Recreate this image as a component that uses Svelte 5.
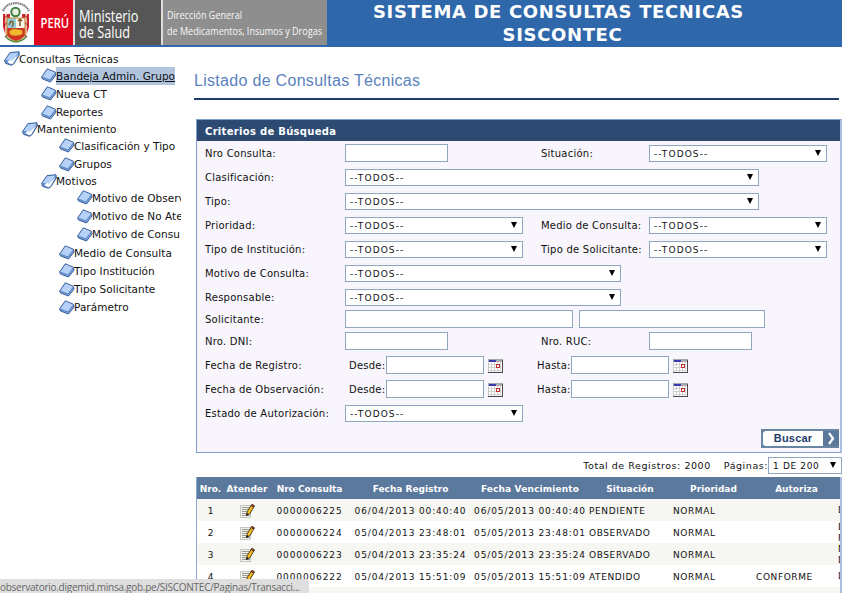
<script>
  const tree = [
    { t: 'Consultas Técnicas', d: 0, open: true },
    { t: 'Bandeja Admin. Grupo', d: 2, active: true },
    { t: 'Nueva CT', d: 2 },
    { t: 'Reportes', d: 2 },
    { t: 'Mantenimiento', d: 1, open: true },
    { t: 'Clasificación y Tipo', d: 3 },
    { t: 'Grupos', d: 3 },
    { t: 'Motivos', d: 2, open: true },
    { t: 'Motivo de Observ', d: 4 },
    { t: 'Motivo de No Ate', d: 4 },
    { t: 'Motivo de Consu', d: 4 },
    { t: 'Medio de Consulta', d: 3 },
    { t: 'Tipo Institución', d: 3 },
    { t: 'Tipo Solicitante', d: 3 },
    { t: 'Parámetro', d: 3 },
  ];
  const rows = [
    ['1', '0000006225', '06/04/2013 00:40:40', '06/05/2013 00:40:40', 'PENDIENTE', 'NORMAL', '', ['D']],
    ['2', '0000006224', '05/04/2013 23:48:01', '05/05/2013 23:48:01', 'OBSERVADO', 'NORMAL', '', ['E', 'F']],
    ['3', '0000006223', '05/04/2013 23:35:24', '05/05/2013 23:35:24', 'OBSERVADO', 'NORMAL', '', ['N', 'D']],
    ['4', '0000006222', '05/04/2013 15:51:09', '05/05/2013 15:51:09', 'ATENDIDO', 'NORMAL', 'CONFORME', ['D']],
    ['', '', '', '', '', '', '', []],
  ];
</script>

{#snippet select(cls)}
  <div class="select {cls}"><span>--TODOS--</span><i></i></div>
{/snippet}

{#snippet calendar()}
  <svg class="cal" width="15" height="14" viewBox="0 0 15 14" shape-rendering="crispEdges">
    <rect width="15" height="14" fill="#c9c9c9" />
    <rect x="1" y="1" width="13" height="12" fill="#fff" />
    <path d="M1 5.500h12M1 8.500h12M1 11.500h12M3.500 3v10M6.500 3v10M9.500 3v10M12.500 3v10" stroke="#d2d2d2" />
    <rect width="15" height="3" fill="#aaa" />
    <rect x="1" y="1" width="7" height="2" fill="#3b3bb0" />
    <path d="M0 13.500h15M14.500 1v13" stroke="#4a4a4a" />
    <rect x="8.500" y="5.500" width="3" height="3" fill="#fff" stroke="#c42f2f" />
  </svg>
{/snippet}

{#snippet dates(label)}
  <div class="row">
    <label>{label}</label>
    <div class="first dates"><span class="from">Desde:</span><div class="input date"></div>{@render calendar()}</div>
    <div class="dates until"><span class="to">Hasta:</span><div class="input date"></div>{@render calendar()}</div>
  </div>
{/snippet}

<div class="page">
  <header>
    <div class="crest">
      <svg width="34" height="45" viewBox="0 0 34 45">
        <path d="M3 11C7 .5 24 .5 29 11" fill="none" stroke="#777" stroke-width="2.200" stroke-dasharray="1.500 .7" />
        <path d="M3 14h7v16l4 9-8-3-3-9zM29 14h-7v16l-4 9 8-3 3-9z" fill="#d8222c" />
        <path d="M6 12v23M26 12v23" stroke="#f4e7cf" stroke-width="1.500" />
        <path d="M3 19l5-4M3 26l5-4M29 19l-5-4M29 26l-5-4" stroke="#8d2420" />
        <circle cx="15.500" cy="12" r="4.200" fill="#e9f0dc" stroke="#3f7d45" stroke-width="2" />
        <path d="M7 18h9v10H7z" fill="#8fd0dc" />
        <path d="M16 18h9v10h-9z" fill="#f8f4e6" />
        <path d="M7 28h18v6q-1 5-9 7-8-2-9-7z" fill="#d92a24" />
        <path d="M9 25l2-4 2 1v3l-1 2M20 20v6M18 21l2-2 2 2" fill="none" stroke="#80592d" stroke-width="1.500" />
        <path d="M9 32q2-4 7-3l6 1q2 4-1 5l-5 1q-7 0-7-4z" fill="#f1b82d" stroke="#a6661c" stroke-width=".7" />
        <path d="M7 18h18v16q-1 5-9 7-8-2-9-7z" fill="none" stroke="#b9862e" />
        <path d="M5 36q4 5 11 6 7-1 11-6" fill="none" stroke="#5d8b48" stroke-width="1.500" />
      </svg>
    </div>
    <div class="peru"><span>PERÚ</span></div>
    <div class="ministry"><span>Ministerio</span><span>de Salud</span></div>
    <div class="office"><span>Dirección General</span><span>de Medicamentos, Insumos y Drogas</span></div>
    <h1><span>SISTEMA DE CONSULTAS TECNICAS</span><span class="sub">SISCONTEC</span></h1>
  </header>

  <div class="body">
    <nav>
      {#each tree as n}
        <div class="node d{n.d}" class:open={n.open}>
          {#if n.open}
            <svg width="16" height="15" viewBox="0 0 16 15">
              <path d="M.6 9.500L6 1.600l9-.9.3 3.300L9.800 12.800 7.500 14.300 1.500 12.300z" fill="#6a92cf" stroke="#3a5f98" />
              <path d="M1.500 9L6.300 2.300 14.300 1.500 9.500 9z" fill="#b3d0f8" />
              <path d="M3.500 11.300Q5 8 8 9.500L14.300 3.500l-5 8.800-2 1z" fill="#fff" />
            </svg>
          {:else}
            <svg width="16" height="15" viewBox="0 0 16 15">
              <path d="M.6 9L6.300 .8l8 3.400.8 2.800-5.600 7-8-3z" fill="#7fa6df" stroke="#3a5f98" />
              <path d="M1.500 8.700L6.600 1.600 14 4.700 8.800 11.500z" fill="#b6d2f9" />
              <path d="M1.500 9.200l7.400 2.900L14.500 5" fill="none" stroke="#4f78b6" stroke-width=".8" />
            </svg>
          {/if}
          <span class:active={n.active}>{n.t}</span>
        </div>
      {/each}
    </nav>

    <main>
      <h2><span>Listado de Consultas Técnicas</span></h2>

      <section class="form">
        <div class="title">Criterios de Búsqueda</div>
        <div class="row">
          <label>Nro Consulta:</label>
          <div class="first"><div class="input w103"></div></div>
          <label class="second">Situación:</label>{@render select('w178')}
        </div>
        <div class="row"><label>Clasificación:</label>{@render select('w414')}</div>
        <div class="row"><label>Tipo:</label>{@render select('w414')}</div>
        <div class="row">
          <label>Prioridad:</label>
          <div class="first">{@render select('w178')}</div>
          <label class="second">Medio de Consulta:</label>{@render select('w178')}
        </div>
        <div class="row">
          <label>Tipo de Institución:</label>
          <div class="first">{@render select('w178')}</div>
          <label class="second">Tipo de Solicitante:</label>{@render select('w178')}
        </div>
        <div class="row"><label>Motivo de Consulta:</label>{@render select('w276')}</div>
        <div class="row"><label>Responsable:</label>{@render select('w276')}</div>
        <div class="persons">
          <div class="row short"><label>Solicitante:</label><div class="pair"><div class="input w228"></div><div class="input w186"></div></div></div>
          <div class="row short">
            <label>Nro. DNI:</label>
            <div class="first"><div class="input w103"></div></div>
            <label class="second">Nro. RUC:</label><div class="input w103"></div>
          </div>
        </div>
        {@render dates('Fecha de Registro:')}
        {@render dates('Fecha de Observación:')}
        <div class="row"><label>Estado de Autorización:</label>{@render select('w178')}</div>
        <div class="actions">
          <button><span>Buscar</span>
            <svg width="16" height="17" viewBox="0 0 16 17"><path d="M6 3l4 5.500-4 5.500" fill="none" stroke="#fff" stroke-width="2.200" /></svg>
          </button>
        </div>
      </section>

      <div class="pager">
        <span class="total">Total de Registros: 2000</span><span class="pages">Páginas:</span>
        <div class="select w73"><span>1 DE 200</span><i></i></div>
      </div>

      <section class="grid">
        <div class="tr th">
          <div>Nro.</div><div>Atender</div><div>Nro Consulta</div><div>Fecha Registro</div><div class="wide">Fecha Vencimiento</div><div>Situación</div><div>Prioridad</div><div>Autoriza</div><div></div>
        </div>
        {#each rows as r}
          <div class="tr">
            <div>{r[0]}</div>
            <div>
              {#if r[0]}
                <svg width="15" height="14" viewBox="0 0 15 14">
                  <path d="M.5 1.500h10v12H.5z" fill="#f1f1ec" stroke="#c4c4c0" />
                  <path d="M2 3.500h8M2 5.500h7M2 7.500h6M2 9.500h4M2 11.500h8" stroke="#9a9a94" />
                  <path d="M6.500 11.500l.7-4L11.500 1l2.500 1.500-4 7z" fill="#f5bd20" stroke="#40310e" stroke-width=".9" />
                  <path d="M11 1.500L12 .3l2.500 1.400-.8 1.600z" fill="#b9332b" stroke="#33251a" stroke-width=".7" />
                  <path d="M6.300 12l.5-3 2 1.200z" fill="#111" />
                </svg>
              {/if}
            </div>
            <div class="num">{r[1]}</div><div class="num">{r[2]}</div><div class="num">{r[3]}</div>
            <div class="l">{r[4]}</div><div class="l">{r[5]}</div><div class="l">{r[6]}</div>
            <div class="l cut">{#each r[7] as c}<span>{c}</span>{/each}</div>
          </div>
        {/each}
      </section>
    </main>
  </div>
  <div class="status">observatorio.digemid.minsa.gob.pe/SISCONTEC/Paginas/Transacci...</div>
</div>

<style>
  .page {
    width: 842px;
    height: 593px;
    overflow: hidden;
    position: relative;
    background: #fff;
    color: #111;
    font-family: 'DejaVu Sans', Verdana, sans-serif;
    font-size: 10px;
    display: flex;
    flex-direction: column;
  }
  header {
    height: 47px;
    flex: none;
    display: flex;
    align-items: flex-start;
    background: #2f67ab;
    color: #fff;
    white-space: nowrap;
  }
  header > div {
    height: 45px;
    box-sizing: border-box;
    font-family: 'Open Sans', sans-serif;
  }
  .crest { width: 34px; background: #fff; }
  .crest svg { display: block; }
  .peru {
    width: 39px;
    background: #e2051c;
    display: flex;
    align-items: center;
    justify-content: center;
    font-size: 14px;
    font-weight: 600;
    padding-left: 3px;
  }
  .peru span { transform: scaleX(.8); }
  .ministry {
    width: 88px;
    background: #565656;
    border-left: 2px solid #ddd;
    padding: 8px 0 0 4px;
    font-size: 15.500px;
    line-height: 16px;
    font-weight: 500;
  }
  .ministry span { display: block; width: max-content; transform: scaleX(.82); transform-origin: left; }
  .office {
    width: 166px;
    background: #8e8e8e;
    border-left: 2px solid #ddd;
    padding: 7px 0 0 4px;
    font-size: 11.500px;
    line-height: 16px;
    color: #f8f8f8;
  }
  .office span { display: block; width: max-content; transform: scaleX(.785); transform-origin: left; }
  h1 {
    flex: 1;
    margin: 0 67px 0 15px;
    padding-top: 1px;
    display: flex;
    flex-direction: column;
    align-items: center;
    font-size: 18px;
    line-height: 22.500px;
    font-weight: bold;
    letter-spacing: .65px;
  }
  .sub { padding-left: 8px; }
  .body { flex: 1; display: flex; min-height: 0; }
  nav { width: 181px; flex: none; overflow: hidden; padding-top: 4px; }
  .node { height: 18.250px; display: flex; align-items: center; white-space: nowrap; font-size: 10.500px; }
  .node.open { height: 15.500px; }
  .node svg { flex: none; margin-right: -1px; }
  .node span { line-height: 18px; letter-spacing: .03px; }
  .d0 { padding-left: 4px; }
  .d1 { padding-left: 22px; }
  .d2 { padding-left: 41px; }
  .d3 { padding-left: 59px; }
  .d4 { padding-left: 77px; }
  .active { background: #b0c4de; text-decoration: underline; }
  main { flex: 1; min-width: 0; padding-left: 12px; }
  h2 {
    margin: 0 3px 0 1px;
    height: 53px;
    box-sizing: border-box;
    padding-top: 23px;
    border-bottom: 2px solid #1f3c6b;
    font: 16px/22px 'Liberation Sans', Arial, sans-serif;
    color: #5a82bd;
    letter-spacing: .3px;
  }
  .form {
    margin: 19px 0 0 3px;
    height: 334px;
    box-sizing: border-box;
    border: 1px solid #7d9ccb;
    border-right: 2px solid #a9bfdf;
    background: #f8f6fc;
  }
  .title {
    height: 21px;
    padding-left: 8px;
    background: #2d4a72;
    color: #fff;
    font-weight: bold;
    font-size: 10px;
    line-height: 23px;
    letter-spacing: .3px;
  }
  .row { height: 24px; display: flex; align-items: center; padding-left: 8px; white-space: nowrap; letter-spacing: .24px; }
  .row.short { height: 22px; }
  .persons { margin: -1px 0 1px; }
  .row label { width: 140px; flex: none; }
  .first { width: 196px; flex: none; }
  .row label.second { width: 108px; }
  .input, .select {
    box-sizing: border-box;
    border: 1px solid #8fa6c0;
    background: #fff;
    flex: none;
  }
  .input { height: 18px; }
  .select {
    height: 17px;
    display: flex;
    align-items: center;
    justify-content: space-between;
    padding: 0 5px 0 4px;
    font-size: 9px;
    letter-spacing: 1.100px;
  }
  .select span { padding-top: 1px; }
  .select i {
    border: 3.500px solid transparent;
    border-top: 6px solid #000;
    border-bottom: 0;
  }
  .w103 { width: 103px; }
  .w178 { width: 178px; }
  .w414 { width: 414px; }
  .w276 { width: 276px; }
  .w228 { width: 228px; }
  .w186 { width: 186px; }
  .select.w73 { width: 74px; letter-spacing: .65px; }
  .date { width: 98px; }
  .pair { display: flex; gap: 6px; }
  .dates { display: flex; align-items: center; }
  .first.dates { width: 192px; padding-left: 4px; box-sizing: border-box; }
  .from { width: 37px; }
  .to { width: 34px; }
  .cal { margin: 2px 0 0 4px; }
  .actions { display: flex; justify-content: flex-end; padding: 4px 1px 0 0; }
  button {
    width: 78px;
    height: 19px;
    padding: 0;
    border: 2px solid #6886a3;
    border-right: 0;
    background: #5b789a;
    display: flex;
    align-items: center;
  }
  button span {
    width: 60px;
    height: 15px;
    border-radius: 3px 0 0 3px;
    background: #fff;
    color: #1f3c6b;
    font: bold 11px/15px 'Liberation Sans', Arial, sans-serif;
    text-align: center;
    letter-spacing: .2px;
  }
  .pager { height: 24px; display: flex; align-items: center; justify-content: flex-end; }
  .pages { margin: 0 0 0 13px; }
  .total, .pages { font-size: 9.500px; letter-spacing: .55px; }
  .grid {
    margin-left: 3px;
    border-left: 1px solid #8aa8d6;
    border-right: 2px solid #a9bfdf;
    font-size: 9px;
  }
  .tr {
    display: grid;
    grid-template-columns: 27px 46px 79px 123px 116px 84px 83px 83px 3px;
    height: 22px;
    box-sizing: border-box;
    padding-top: 1px;
    overflow: hidden;
    align-items: center;
    text-align: center;
    white-space: nowrap;
    background: #fff;
  }
  .tr:nth-child(even) { background: #f6f6f2; }
  .tr.th { background: #5b789d; color: #fff; font-weight: bold; }
  .tr .wide { letter-spacing: .15px; }
  .tr svg { display: block; margin: 0 auto; }
  .tr .num { letter-spacing: .88px; }
  .tr .l { text-align: left; padding-left: 1px; letter-spacing: .6px; }
  .tr .cut { padding: 0; overflow: hidden; }
  .cut span { display: block; line-height: 10.500px; }
  .status {
    position: absolute;
    left: 0;
    bottom: 0;
    width: 309px;
    height: 14px;
    background: #dedede;
    border-top-right-radius: 3px;
    color: #666;
    font: 10px/16px 'Open Sans', sans-serif;
    letter-spacing: -.26px;
    white-space: nowrap;
    overflow: hidden;
  }
</style>
